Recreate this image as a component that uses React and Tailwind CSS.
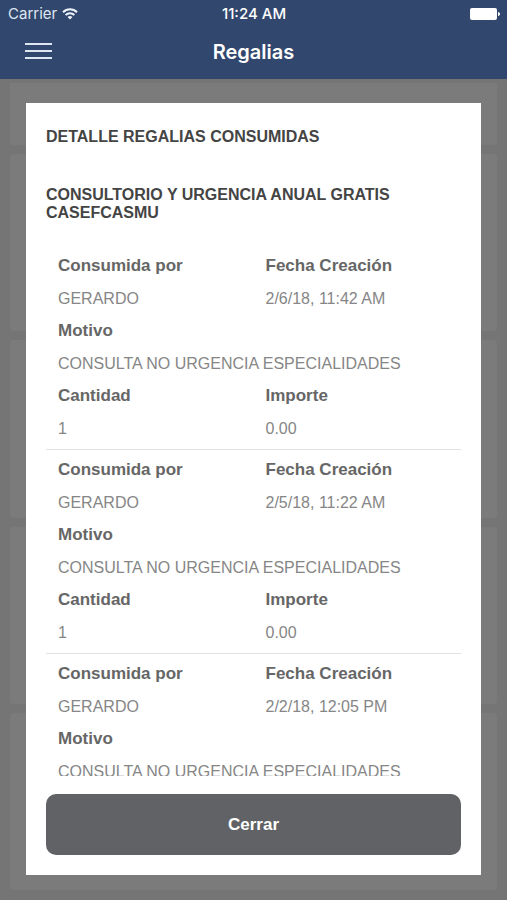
const consumos = [
  { por: 'GERARDO', fecha: '2/6/18, 11:42 AM', motivo: 'CONSULTA NO URGENCIA ESPECIALIDADES', cantidad: '1', importe: '0.00' },
  { por: 'GERARDO', fecha: '2/5/18, 11:22 AM', motivo: 'CONSULTA NO URGENCIA ESPECIALIDADES', cantidad: '1', importe: '0.00' },
  { por: 'GERARDO', fecha: '2/2/18, 12:05 PM', motivo: 'CONSULTA NO URGENCIA ESPECIALIDADES' },
];

function StatusBar() {
  return (
    <div className="grid h-7 grid-cols-3 items-center pr-[7px] pl-2 text-[15px] leading-5">
      <div className="flex items-center gap-[5px] text-[#dfe6f2]">
        <span>Carrier</span>
        <svg width="16" height="12" viewBox="0 0 16 12" fill="none" stroke="#eef3fb" strokeWidth="2" aria-hidden="true">
          <path d="M1 4.2C4.9.4 11.1.4 15 4.2" />
          <path d="M3.6 7C6.1 4.6 9.9 4.6 12.4 7" />
          <path d="M8 11.6 5.5 9.1a3.6 3.6 0 0 1 5 0Z" fill="#eef3fb" stroke="none" />
        </svg>
      </div>
      <div className="text-center font-medium whitespace-nowrap">11:24 AM</div>
      <svg className="justify-self-end" width="30" height="12" viewBox="0 0 30 12" fill="#fff" aria-hidden="true">
        <rect width="27" height="12" rx="2" />
        <path d="M28 4c1.3.2 2 1 2 2s-.7 1.8-2 2Z" />
      </svg>
    </div>
  );
}

function Campo({ label, value, wide }) {
  return (
    <div className={wide ? 'col-span-2' : ''}>
      <dt className="text-[17px] leading-8 font-bold text-[#666666]">{label}</dt>
      <dd className="text-[16px] leading-[33px] whitespace-nowrap text-[#868686]">{value}</dd>
    </div>
  );
}

export default function App() {
  return (
    <div className="flex h-screen flex-col overflow-hidden bg-[#757575] font-['Liberation_Sans',Arial,sans-serif]">
      <header className="shrink-0 bg-[#32476d] font-[Inter,sans-serif] text-white">
        <StatusBar />
        <div className="grid h-[51px] grid-cols-3 items-start">
          <button type="button" aria-label="Menú" className="ml-[25px] flex h-[46px] w-7 items-center">
            <svg width="28" height="16" viewBox="0 0 28 16" fill="#dfe6f2" aria-hidden="true">
              <rect width="27" height="2" y="0" />
              <rect width="27" height="2" y="7" />
              <rect width="27" height="2" y="14" />
            </svg>
          </button>
          <h1 className="text-center text-[20px] leading-[48px] font-semibold">Regalias</h1>
        </div>
      </header>

      <main className="relative min-h-0 flex-1">
        <div className="flex h-full flex-col gap-[9px] overflow-hidden px-[10px] pt-1 pb-[10px]" aria-hidden="true">
          <div className="h-[62px] shrink-0 rounded-b bg-[#7b7b7b]" />
          <div className="flex-1 rounded bg-[#7b7b7b]" />
          <div className="flex-1 rounded bg-[#7b7b7b]" />
          <div className="flex-1 rounded bg-[#7b7b7b]" />
          <div className="flex-1 rounded bg-[#7b7b7b]" />
        </div>

        <div className="absolute inset-0 px-[26px] pt-6 pb-[25px]">
          <section role="dialog" aria-labelledby="titulo" className="flex h-full flex-col bg-white px-5 pt-[25px] pb-5">
            <h2 id="titulo" className="text-[16px] leading-[18px] font-bold text-[#444444]">DETALLE REGALIAS CONSUMIDAS</h2>
            <h3 className="mt-10 text-[16px] leading-[18px] font-bold text-[#444444]">CONSULTORIO Y URGENCIA ANUAL GRATIS CASEFCASMU</h3>
            <div className="mt-6 min-h-0 flex-1 overflow-y-auto [scrollbar-width:none]">
              {consumos.map((c) => (
                <dl key={c.fecha} className="grid grid-cols-2 border-b border-[#e2e2e2] px-3 py-1">
                  <Campo label="Consumida por" value={c.por} />
                  <div className="pl-3">
                    <Campo label="Fecha Creación" value={c.fecha} />
                  </div>
                  <Campo label="Motivo" value={c.motivo} wide />
                  {c.cantidad && <Campo label="Cantidad" value={c.cantidad} />}
                  {c.importe && (
                    <div className="pl-3">
                      <Campo label="Importe" value={c.importe} />
                    </div>
                  )}
                </dl>
              ))}
            </div>
            <button type="button" className="mt-[18px] h-[61px] shrink-0 rounded-[10px] bg-[#606265] text-[17px] font-bold text-white">
              Cerrar
            </button>
          </section>
        </div>
      </main>
    </div>
  );
}
